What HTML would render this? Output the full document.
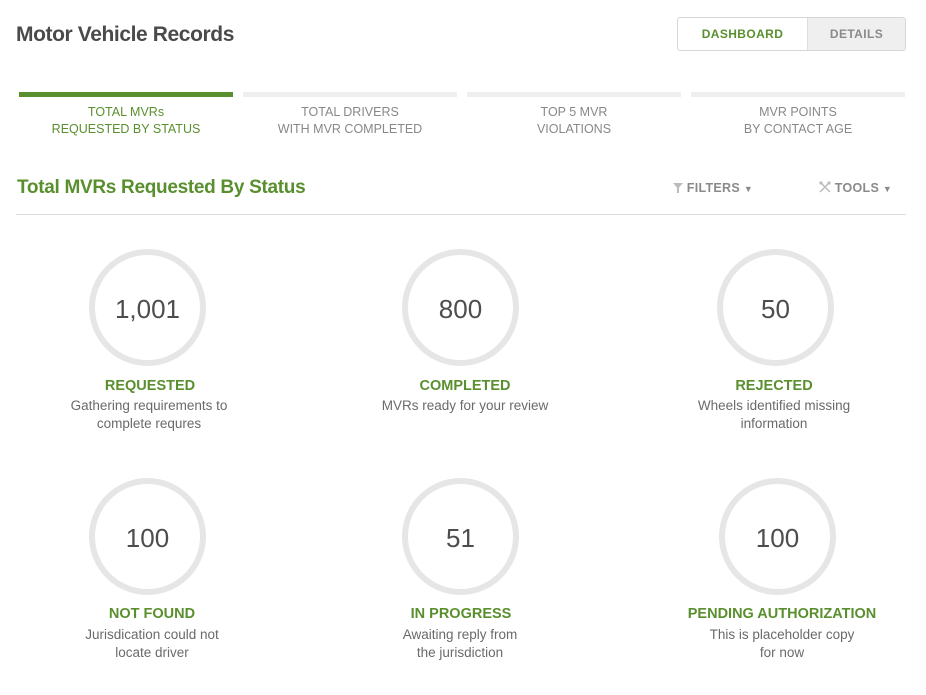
<!DOCTYPE html>
<html><head><meta charset="utf-8"><style>
body{margin:0;width:926px;height:695px;background:#fff;font-family:"Liberation Sans",Arial,sans-serif;position:relative;overflow:hidden}
.a{position:absolute}
h1{position:absolute;left:16px;top:23px;margin:0;font-size:21px;font-weight:bold;color:#4a4a4a;letter-spacing:-0.4px}
.btns{left:677px;top:17px;width:227px;height:32px;border:1px solid #d6d6d6;border-radius:3px;overflow:hidden;display:flex;font-size:12px;font-weight:bold;letter-spacing:.4px}
.btns div{display:flex;align-items:center;justify-content:center}
.tab{top:92px;width:214px;height:5px;background:#eeeeee}
.tl{top:104px;width:214px;text-align:center;font-size:12.5px;line-height:16.5px;color:#888;letter-spacing:0px}
.ring{width:105px;height:105px;border:6.5px solid #e6e6e6;border-radius:50%;display:flex;align-items:center;justify-content:center;font-size:26px;color:#4d4d4d;padding-top:3px;box-sizing:content-box;height:102px}
.lab{width:260px;text-align:center;font-size:14.5px;font-weight:bold;color:#5a8f2e;letter-spacing:0px}
.desc{width:260px;text-align:center;font-size:13.5px;color:#6a6a6a;line-height:17.5px}
</style></head><body>
<h1>Motor Vehicle Records</h1>
<div class="a btns"><div style="width:129px;color:#5a8f2e;border-right:1px solid #ddd">DASHBOARD</div><div style="flex:1;background:#efefef;color:#8a8a8a">DETAILS</div></div>

<div class="a tab" style="left:19px;background:#5a8f2e"></div>
<div class="a tab" style="left:243px"></div>
<div class="a tab" style="left:467px"></div>
<div class="a tab" style="left:691px"></div>
<div class="a tl" style="left:19px;color:#5a8f2e">TOTAL MVRs<br>REQUESTED BY STATUS</div>
<div class="a tl" style="left:243px">TOTAL DRIVERS<br>WITH MVR COMPLETED</div>
<div class="a tl" style="left:467px">TOP 5 MVR<br>VIOLATIONS</div>
<div class="a tl" style="left:691px">MVR POINTS<br>BY CONTACT AGE</div>

<div class="a" style="left:17px;top:177px;font-size:19px;font-weight:bold;color:#5a8f2e;letter-spacing:-0.3px">Total MVRs Requested By Status</div>
<div class="a" style="left:673px;top:181px;font-size:12.5px;font-weight:bold;color:#8a8a8a;letter-spacing:.3px">
<svg width="10" height="10" viewBox="0 0 10 10" style="vertical-align:-1px"><path d="M0 0H10L6 4.5V10H4V4.5Z" fill="#bbb"/></svg> FILTERS <span style="font-size:9px">▼</span></div>
<div class="a" style="left:819px;top:181px;font-size:12.5px;font-weight:bold;color:#8a8a8a;letter-spacing:.3px">
<svg width="12" height="12" viewBox="0 0 12 12" style="vertical-align:-1px"><path d="M1 1L11 11M11 1L1 11" stroke="#bbb" stroke-width="1.5"/><circle cx="2" cy="2" r="1.6" fill="#bbb"/><circle cx="10" cy="2" r="1.6" fill="#bbb"/></svg> TOOLS <span style="font-size:9px">▼</span></div>
<div class="a" style="left:16px;top:214px;width:890px;height:1px;background:#dcdcdc"></div>

<div class="a ring" style="left:89px;top:249px">1,001</div>
<div class="a ring" style="left:402px;top:249px">800</div>
<div class="a ring" style="left:717px;top:249px">50</div>
<div class="a ring" style="left:89px;top:478px">100</div>
<div class="a ring" style="left:402px;top:478px">51</div>
<div class="a ring" style="left:719px;top:478px">100</div>

<div class="a lab" style="left:20px;top:378px">REQUESTED</div>
<div class="a desc" style="left:19px;top:397px">Gathering requirements to<br>complete requres</div>
<div class="a lab" style="left:335px;top:378px">COMPLETED</div>
<div class="a desc" style="left:335px;top:397px">MVRs ready for your review</div>
<div class="a lab" style="left:644px;top:378px">REJECTED</div>
<div class="a desc" style="left:644px;top:397px">Wheels identified missing<br>information</div>

<div class="a lab" style="left:22px;top:606px">NOT FOUND</div>
<div class="a desc" style="left:22px;top:626px">Jurisdication could not<br>locate driver</div>
<div class="a lab" style="left:331px;top:606px">IN PROGRESS</div>
<div class="a desc" style="left:330px;top:626px">Awaiting reply from<br>the jurisdiction</div>
<div class="a lab" style="left:652px;top:606px">PENDING AUTHORIZATION</div>
<div class="a desc" style="left:652px;top:626px">This is placeholder copy<br>for now</div>
</body></html>
